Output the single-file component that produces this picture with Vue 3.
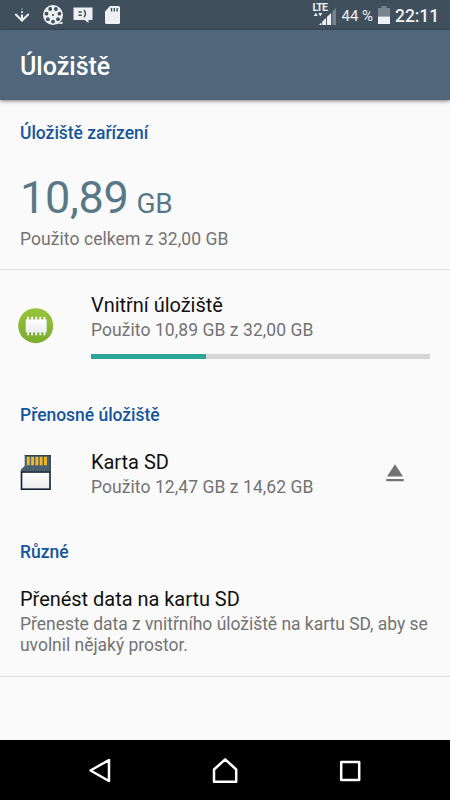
<script setup>
const internal = { used: 10.89, total: 32 }
const percent = (internal.used / internal.total) * 100
</script>

<template>
  <div class="screen">
    <header class="status">
      <div class="notifications">
        <svg class="i-download" width="16" height="16" viewBox="0 0 16 16">
          <path d="M1.300 6 8 12.500 14.700 6M8 12.500V6.500" fill="none" stroke="#eef1f3" stroke-width="2" />
          <circle cx="8" cy="4" r="1.100" fill="#eef1f3" />
          <circle cx="8" cy="1" r=".8" fill="#a9b3bb" />
        </svg>
        <svg class="i-reel" width="22" height="22" viewBox="0 0 22 22">
          <path d="M14 19.500l6.500.5v-2.200l-3 .8z" fill="#eef1f3" />
          <circle cx="11" cy="11" r="10" fill="#eef1f3" />
          <g fill="#3f4f5c">
            <circle cx="8.200" cy="5" r="1.900" /><circle cx="13.900" cy="5" r="1.900" />
            <circle cx="17.400" cy="9.700" r="1.900" /><circle cx="16" cy="15.200" r="1.900" />
            <circle cx="11" cy="17.600" r="1.900" /><circle cx="5.900" cy="15.200" r="1.900" />
            <circle cx="4.500" cy="9.700" r="1.900" /><circle cx="11" cy="11" r="1.100" />
          </g>
        </svg>
        <svg class="i-chat" width="20" height="16" viewBox="0 0 20 16">
          <path d="M.5.5h19v12.500h-4V16l-4-3H.5z" fill="#eef1f3" />
          <path d="M5.500 5h3.300M5.500 8.300h3.300M11 3q2.800 3.600 0 7.200" fill="none" stroke="#3f4f5c" stroke-width="1.400" />
        </svg>
        <svg class="i-sd" width="15" height="18" viewBox="0 0 15 18">
          <path d="M5 0h8.500Q15 0 15 1.500v15Q15 18 13.500 18h-12Q0 18 0 16.500V5.500z" fill="#eef1f3" />
          <path d="M6.500 2v3.600M9.300 2v3.600M12.100 2v3.600" stroke="#3f4f5c" stroke-width="1.400" />
        </svg>
      </div>
      <div class="system">
        <div class="network">
          <span class="lte">LTE</span>
          <svg width="24" height="18" viewBox="0 0 24 18">
            <path d="M.8 9 2.800 5.800l2 3.200zM5.300 6h4l-2 3.200z" fill="#eef1f3" />
            <path d="M6 18 8.500 15.500V18z" fill="#eef1f3" />
            <path d="M9.300 14.500 13 11v7H9.300zM13.900 10l4.200-4v12h-4.200z" fill="#eef1f3" />
            <path d="M19.300 4.500 23 1v17h-3.700z" fill="#75828c" />
          </svg>
        </div>
        <span class="charge">44 %</span>
        <svg class="i-battery" width="12" height="18" viewBox="0 0 12 18">
          <path d="M3.500 0h5v2H12v8.500H0V2h3.500z" fill="#78858e" />
          <path d="M0 10.500h12V18H0z" fill="#eef1f3" />
        </svg>
        <span class="clock">22:11</span>
      </div>
    </header>

    <div class="appbar"><h1>Úložiště</h1></div>

    <main>
      <section class="device">
        <h2>Úložiště zařízení</h2>
        <p class="amount"><span>10,89</span><small>GB</small></p>
        <p class="summary">Použito celkem z 32,00 GB</p>
      </section>

      <section class="row internal">
        <svg class="lead" width="36" height="36" viewBox="0 0 36 36">
          <defs>
            <linearGradient id="green" x2="0" y2="1"><stop stop-color="#98c23c" /><stop offset="1" stop-color="#79ad2b" /></linearGradient>
            <linearGradient id="chip" x2="0" y2="1"><stop stop-color="#fff" /><stop offset="1" stop-color="#ececec" /></linearGradient>
          </defs>
          <circle cx="17.700" cy="17.700" r="17.500" fill="url(#green)" />
          <rect class="chip-shadow" x="7.500" y="12" width="21.400" height="14" />
          <g class="chip-body">
            <path d="M9 8.800h2v18.400H9zM13.100 8.800h2v18.400h-2zM17.200 8.800h2v18.400h-2zM21.300 8.800h2v18.400h-2zM25.400 8.800h2v18.400h-2z" />
            <rect x="7.700" y="11.500" width="21" height="13" />
          </g>
        </svg>
        <div class="body">
          <h3>Vnitřní úložiště</h3>
          <p class="summary">Použito 10,89 GB z 32,00 GB</p>
          <div class="track"><div class="fill" :style="{ width: percent + '%' }"></div></div>
        </div>
      </section>

      <h2>Přenosné úložiště</h2>
      <section class="row card">
        <svg class="lead" width="36" height="36" viewBox="0 0 36 36">
          <path d="M5.700 0h26v16.500h-30v-1.700l4-4z" fill="#496071" />
          <path d="M5.700 0h26v1.300h-26z" fill="#30414f" />
          <path d="M30.700 0h1v17h-1z" fill="#253542" />
          <path d="M7.800 1.700h2.900v8.600H7.800zM12.100 1.700H15v8.600h-2.900zM16.400 1.700h2.900v8.600h-2.900zM20.700 1.700h2.900v8.600h-2.900zM25 1.700h2.900v8.600H25z" fill="#f1ba25" />
          <rect x="2.500" y="17" width="28.500" height="17.200" fill="url(#chip)" stroke="#122131" stroke-width="1.600" />
        </svg>
        <div class="body">
          <h3>Karta SD</h3>
          <p class="summary">Použito 12,47 GB z 14,62 GB</p>
        </div>
        <svg class="eject" width="18" height="18" viewBox="0 0 18 18">
          <path d="M9 .300 17 12.600H1zM.300 15h17.400v2.200H.300z" fill="#737373" />
        </svg>
      </section>

      <h2>Různé</h2>
      <section class="misc">
        <h3>Přenést data na kartu SD</h3>
        <p class="summary">Přeneste data z vnitřního úložiště na kartu SD, aby se uvolnil nějaký prostor.</p>
      </section>
    </main>

    <nav>
      <svg width="26" height="26" viewBox="0 0 26 26"><path d="M22 3v21L3.500 13.500z" /></svg>
      <svg width="26" height="26" viewBox="0 0 26 26"><path d="M2 24.800V12.500L13.200 2.300l11 10.200v12.300z" /></svg>
      <svg width="26" height="26" viewBox="0 0 26 26"><path d="M4.200 4.900h18v18h-18z" /></svg>
    </nav>
  </div>
</template>

<style>
body {
  margin: 0;
}
</style>

<style scoped>
.screen {
  width: 450px;
  height: 800px;
  display: flex;
  flex-direction: column;
  overflow: hidden;
  background: #fafafa;
  color: #111;
  font-family: Roboto, sans-serif;
}
svg {
  display: block;
  flex: none;
}
h1, h2, h3, p {
  margin: 0;
}
.status {
  height: 30px;
  flex: none;
  display: flex;
  justify-content: space-between;
  background: #3f4f5c;
  color: #eef1f3;
}
.notifications,
.system {
  display: flex;
  align-items: flex-start;
}
.i-download { margin: 8px 0 0 14px; }
.i-reel { margin: 4px 0 0 12px; }
.i-chat { margin: 7px 0 0 9px; }
.i-sd { margin: 6px 0 0 12px; }
.network {
  display: grid;
  width: 24px;
  margin-top: 3px;
}
.network > * {
  grid-area: 1 / 1;
}
.network svg {
  margin-top: 4px;
}
.lte {
  font-size: 10.5px;
  line-height: 10px;
  font-weight: 700;
  letter-spacing: -0.8px;
}
.charge {
  margin-left: 5px;
  font-size: 15px;
  line-height: 32px;
}
.i-battery { margin: 6px 0 0 5px; }
.clock {
  margin: 0 11px 0 5px;
  font-size: 17.5px;
  line-height: 32px;
  font-weight: 500;
  letter-spacing: -0.1px;
}
.appbar {
  flex: none;
  height: 70px;
  padding: 1px 20px 0;
  box-sizing: border-box;
  background: #50667a;
  box-shadow: 0 1px 4px rgba(0, 0, 0, 0.5);
  color: #fff;
  z-index: 1;
}
h1 {
  font-size: 25px;
  line-height: 71px;
  font-weight: 500;
}
main {
  flex: 1;
  padding-top: 21px;
}
h2 {
  padding-left: 20px;
  font-size: 17.5px;
  line-height: 24px;
  font-weight: 500;
  letter-spacing: -0.03px;
  color: #17559b;
}
h3 {
  font-size: 20px;
  line-height: 24px;
  font-weight: 400;
  letter-spacing: -0.03px;
}
.summary {
  font-size: 17.5px;
  line-height: 20.5px;
  letter-spacing: 0.07px;
  color: #737373;
}
.device {
  height: 148px;
  border-bottom: 1px solid #dedede;
}
.amount {
  display: flex;
  align-items: baseline;
  gap: 8px;
  height: 53px;
  padding: 26px 20px 0;
  font-size: 45px;
  line-height: 53px;
  letter-spacing: -0.3px;
  color: #587888;
}
.amount small {
  font-size: 28px;
  line-height: 33px;
}
.device .summary {
  padding: 5px 20px 0;
}
.row {
  display: flex;
  padding: 0 20px 0 18px;
}
.body {
  flex: 1;
  margin-left: 37px;
}
.body .summary {
  margin-top: 3px;
}
.internal {
  margin-top: 23px;
  height: 110px;
}
.internal .lead {
  margin-top: 15px;
}
.chip-shadow {
  fill: #4f7d17;
  opacity: 0.3;
}
.chip-body {
  fill: #f6f6f6;
}
.chip-body rect {
  fill: url(#chip);
}
.track {
  height: 5px;
  margin-top: 13.5px;
  background: #d6d6d6;
}
.fill {
  height: 100%;
  background: #2ba698;
}
.card {
  margin-top: 23px;
  height: 90px;
}
.card .lead {
  margin: 5px 0 0 1px;
}
.card .body {
  margin-left: 36px;
}
.eject {
  margin: 14px 26px 0 0;
}
.misc {
  margin-top: 23px;
  height: 89px;
  padding: 0 20px;
  border-bottom: 1px solid #dedede;
}
.misc .summary {
  margin-top: 3px;
  letter-spacing: -0.03px;
}
nav {
  flex: none;
  height: 60px;
  display: flex;
  justify-content: center;
  align-items: center;
  gap: 99px;
  background: #000;
}
nav path {
  fill: none;
  stroke: #fff;
  stroke-width: 2.5;
  stroke-linejoin: round;
}
</style>
